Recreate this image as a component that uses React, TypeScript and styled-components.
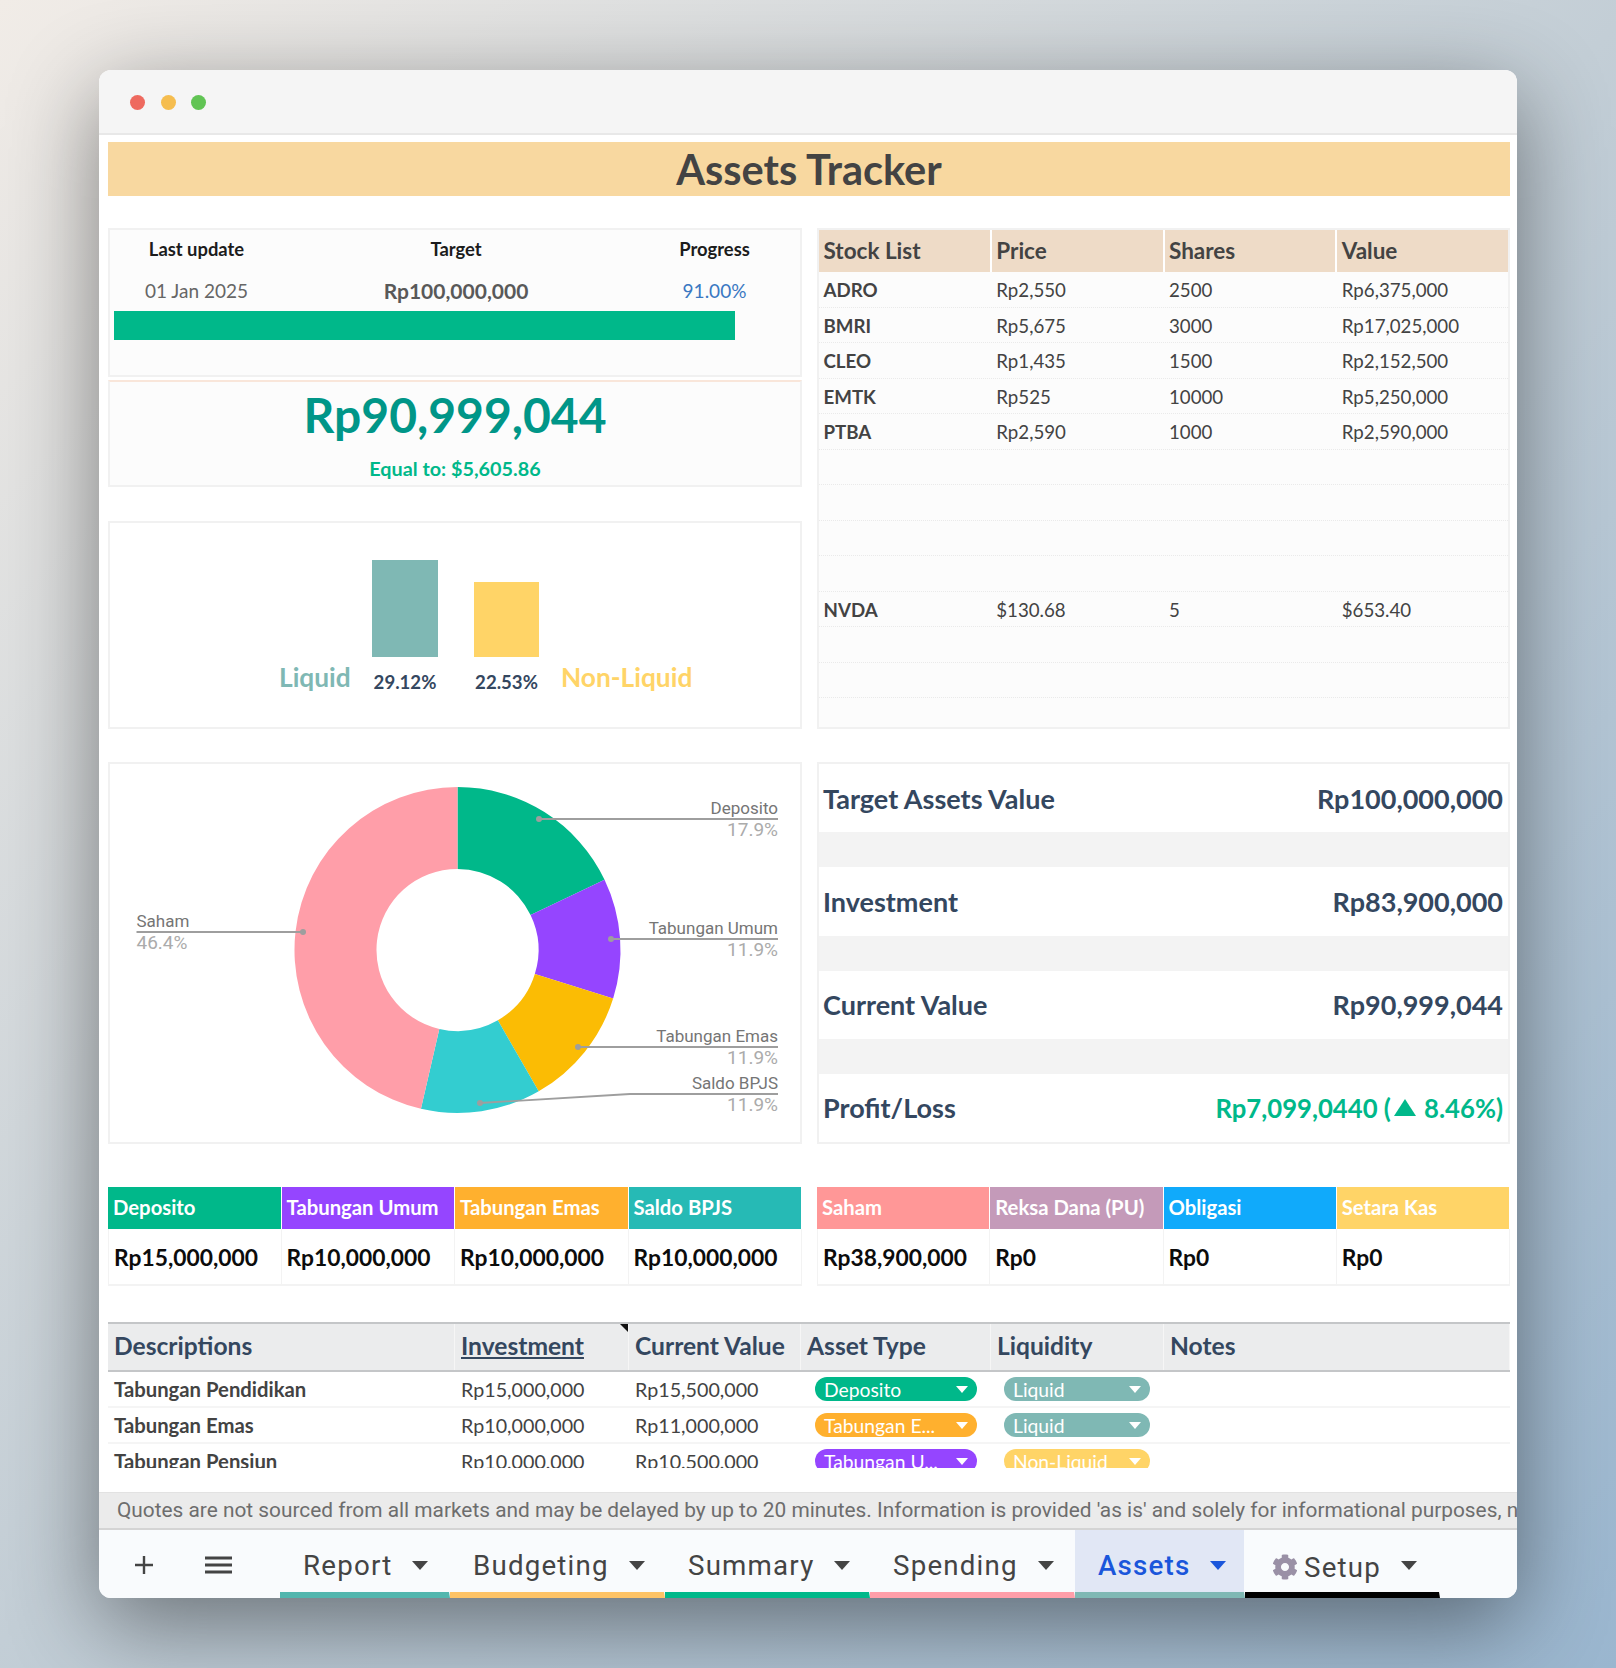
import { Fragment } from "react";
import styled, { createGlobalStyle } from "styled-components";
import { FaCog } from "react-icons/fa";

const GlobalStyle = createGlobalStyle`
  html, body {
    margin: 0;
    padding: 0;
  }
  body {
    font-family: "Lato", "Noto Sans", sans-serif;
  }
  * {
    box-sizing: border-box;
  }
`;

const Page = styled.div`
  width: 1616px;
  height: 1668px;
  padding: 70px 99px;
  background: linear-gradient(135deg, #f1ece7 0%, #c3ced6 50%, #9ab6cf 100%);
  overflow: hidden;
`;

const Window = styled.div`
  display: flex;
  flex-direction: column;
  width: 1418px;
  height: 1528px;
  background: #fff;
  border-radius: 12px;
  overflow: hidden;
  box-shadow: 0 25px 90px rgba(0, 0, 0, 0.45);
`;

const TitleBar = styled.div`
  display: flex;
  align-items: center;
  gap: 15.5px;
  height: 65px;
  padding: 1px 0 0 31px;
  background: #f5f5f5;
  border-bottom: 2px solid #e8e8e8;
`;

const Dot = styled.span<{ $color: string }>`
  width: 15px;
  height: 15px;
  border-radius: 50%;
  background: ${(p) => p.$color};
`;

const Sheet = styled.div`
  display: flex;
  flex-direction: column;
  flex: 1;
  min-height: 0;
  padding: 7px 7px 0 9px;
`;

const Banner = styled.h1`
  margin: 0 0 32px;
  height: 54px;
  background: #f8d8a0;
  color: #434343;
  font-size: 41.5px;
  font-weight: 700;
  line-height: 54px;
  text-align: center;
`;

const Columns = styled.div<{ $gap: number }>`
  display: grid;
  grid-template-columns: 694px 693px;
  column-gap: 15px;
  margin-bottom: ${(p) => p.$gap}px;
`;

const LeftStack = styled.div`
  display: flex;
  flex-direction: column;
`;

const Panel = styled.section<{ $shade?: boolean }>`
  border: 2px solid #f1f1f1;
  background: ${(p) => (p.$shade ? "#fcfcfc" : "#fff")};
`;

const ProgressPanel = styled(Panel)`
  height: 149px;
  margin-bottom: 3px;
  padding-top: 4px;
`;

const MetaGrid = styled.div`
  display: grid;
  grid-template-columns: 173px 346px 171px;
  grid-template-rows: 30px 46px;
  align-items: center;
  text-align: center;
`;

const MetaLabel = styled.div`
  color: #1c1c1c;
  font-size: 18.4px;
  font-weight: 700;
`;

const MetaValue = styled.div<{ $tone: string; $large?: boolean }>`
  padding-top: 6px;
  color: ${(p) => p.$tone};
  font-size: ${(p) => (p.$large ? 21 : 19)}px;
  font-weight: ${(p) => (p.$large ? 700 : 400)};
`;

const ProgressTrack = styled.div`
  margin: 1px 4px 0;
  height: 29px;
`;

const ProgressFill = styled.div`
  height: 100%;
  background: #00b88a;
`;

const TotalPanel = styled(Panel)`
  height: 107px;
  margin-bottom: 34px;
  border-top-color: #f9e6da;
  text-align: center;
`;

const TotalValue = styled.div`
  margin-top: 5px;
  color: #009688;
  font-size: 48px;
  font-weight: 700;
  line-height: 56px;
`;

const TotalNote = styled.div`
  margin-top: 13px;
  color: #00b88a;
  font-size: 19.8px;
  font-weight: 700;
`;

const LiquidPanel = styled(Panel)`
  height: 208px;
  padding: 36px 0 0 169px;
`;

const LiquidRow = styled.div`
  display: grid;
  grid-template-columns: 71px 66px 79px auto;
  column-gap: 22px;
  height: 135px;
  align-items: end;
`;

const LiquidName = styled.div<{ $color: string }>`
  color: ${(p) => p.$color};
  font-size: 26.3px;
  font-weight: 700;
  line-height: 30px;
  padding-bottom: 2px;
  white-space: nowrap;
`;

const BarColumn = styled.div<{ $offset?: number }>`
  display: flex;
  flex-direction: column;
  align-items: center;
  margin-left: ${(p) => p.$offset ?? 0}px;
`;

const Bar = styled.div<{ $color: string }>`
  width: 100%;
  background: ${(p) => p.$color};
`;

const BarValue = styled.div`
  margin-top: 13px;
  color: #34475f;
  font-size: 18.6px;
  font-weight: 700;
  line-height: 24px;
  white-space: nowrap;
`;

const StockPanel = styled(Panel)`
  display: flex;
  flex-direction: column;
  height: 501px;
  overflow: hidden;
`;

const StockHead = styled.div`
  display: grid;
  grid-template-columns: repeat(4, 1fr);
  column-gap: 2px;
  flex: none;
  height: 42px;
`;

const StockHeadCell = styled.div`
  display: flex;
  align-items: center;
  padding: 0 0 2px 4.5px;
  background: #eedbc7;
  color: #434343;
  font-size: 22.5px;
  font-weight: 700;
`;

const StockBody = styled.div`
  display: grid;
  flex: 1;
  min-height: 0;
  grid-auto-rows: 35.5px;
  background: #fcfcfc;
`;

const StockRow = styled.div`
  display: grid;
  grid-template-columns: repeat(4, 1fr);
  column-gap: 2px;
  align-items: center;
  border-bottom: 1px dotted #eaeaea;

  &:last-child {
    border-bottom: 0;
  }
`;

const StockCell = styled.div<{ $bold?: boolean }>`
  padding: 2px 0 0 4.5px;
  color: #434343;
  font-size: 18.7px;
  font-weight: ${(p) => (p.$bold ? 700 : 400)};
`;

const ChartPanel = styled(Panel)`
  height: 382px;
`;

const ChartSvg = styled.svg`
  display: block;
  width: 690px;
  height: 378px;
`;

const SummaryPanel = styled(Panel)`
  display: flex;
  flex-direction: column;
  height: 382px;
`;

const SummaryRow = styled.div`
  display: flex;
  flex: 1;
  align-items: center;
  justify-content: space-between;
  padding: 0 5px 0 4px;
  color: #34475f;
  font-size: 27px;
  font-weight: 700;
`;

const SummaryGap = styled.div`
  height: 35px;
  background: #f3f3f3;
`;

const ProfitValue = styled.span`
  display: flex;
  align-items: center;
  color: #00b88a;
  font-size: 25.7px;
  white-space: pre;
`;

const ProfitArrow = styled.span`
  width: 0;
  height: 0;
  margin: 0 2px 0 3px;
  border-left: 11px solid transparent;
  border-right: 11px solid transparent;
  border-bottom: 17px solid #00b88a;
`;

const CategoryGrid = styled.div`
  display: grid;
  grid-template-columns: repeat(4, 1fr);
  grid-template-rows: 42px 55px;
  border-bottom: 2px solid #f3f3f3;
`;

const CategoryHead = styled.div<{ $color: string }>`
  display: flex;
  align-items: center;
  padding: 0 0 2px 5px;
  background: ${(p) => p.$color};
  color: #fff;
  font-size: 20.3px;
  font-weight: 700;
  white-space: nowrap;
  border-right: 1px solid #fff;
`;

const CategoryValue = styled.div`
  display: flex;
  align-items: center;
  padding: 1px 0 0 5px;
  color: #0c0c0c;
  font-size: 22.8px;
  font-weight: 700;
  border-right: 1px solid #f3f3f3;

  &:nth-child(5) {
    border-left: 1px solid #f3f3f3;
  }
`;

const LedgerClip = styled.div`
  height: 146px;
  overflow: hidden;
`;

const LedgerRow = styled.div`
  display: grid;
  grid-template-columns: 347px 174px 172px 190px 173px 1fr;
  align-items: center;
`;

const LedgerHead = styled(LedgerRow)`
  height: 50px;
  background: #ebeced;
  border-top: 2px solid #c4c6c8;
  border-bottom: 2px solid #c4c6c8;
`;

const LedgerHeadCell = styled.div<{ $noted?: boolean }>`
  position: relative;
  display: flex;
  align-items: center;
  height: 100%;
  padding: 0 0 3px 6px;
  color: #34475f;
  font-size: 24.6px;
  font-weight: 700;
  white-space: nowrap;
  border-right: 1px solid #f6f6f6;

  &::after {
    content: "";
    display: ${(p) => (p.$noted ? "block" : "none")};
    position: absolute;
    top: 0;
    right: 0;
    border-top: 8px solid #111;
    border-left: 8px solid transparent;
  }
`;

const HeadLink = styled.span`
  text-decoration: underline;
`;

const LedgerBodyRow = styled(LedgerRow)`
  height: 36px;
  border-bottom: 2px solid #f5f5f5;
`;

const LedgerCell = styled.div<{ $bold?: boolean }>`
  padding-left: 6px;
  color: #434343;
  font-size: ${(p) => (p.$bold ? 20.3 : 19.7)}px;
  font-weight: ${(p) => (p.$bold ? 700 : 400)};
  white-space: nowrap;
`;

const PillCell = styled.div<{ $inset: number; $width: number }>`
  padding-left: ${(p) => p.$inset}px;
  width: ${(p) => p.$inset + p.$width}px;
`;

const Pill = styled.div<{ $color: string }>`
  display: flex;
  align-items: center;
  justify-content: space-between;
  height: 24px;
  padding: 0 9px 0 9px;
  border-radius: 12px;
  background: ${(p) => p.$color};
  color: #fff;
  font-size: 19.3px;
  white-space: nowrap;
`;

const PillCaret = styled.span`
  width: 0;
  height: 0;
  border-left: 6px solid transparent;
  border-right: 6px solid transparent;
  border-top: 7px solid #fff;
`;

const Notice = styled.div`
  flex: none;
  height: 38px;
  margin-top: 24px;
  padding-left: 18px;
  background: #ebebeb;
  border-top: 1px solid #e2e2e2;
  border-bottom: 2px solid #d4d4d4;
  color: #6d6d6d;
  font-family: "Roboto", sans-serif;
  font-size: 20.85px;
  line-height: 35px;
  white-space: nowrap;
  overflow: hidden;
`;

const TabBar = styled.nav`
  flex: none;
  display: flex;
  height: 68px;
  background: #f9fbfd;
`;

const TabTools = styled.div`
  display: flex;
  align-items: center;
  width: 181px;
  height: 62px;
  padding: 8px 0 0 35px;
  color: #444;
`;

const PlusIcon = styled.svg`
  width: 20px;
  height: 20px;
  margin-right: 51px;
`;

const MenuIcon = styled.svg`
  width: 27px;
  height: 18px;
`;

const Tab = styled.div<{ $width: number; $accent: string; $active?: boolean }>`
  display: flex;
  align-items: center;
  width: ${(p) => p.$width}px;
  padding: 8px 0 0 23px;
  background: ${(p) => (p.$active ? "#e1e7f5" : "transparent")};
  border-bottom: 6px solid ${(p) => p.$accent};
  border-right: 1px solid #f9fbfd;
  color: ${(p) => (p.$active ? "#1a56db" : "#444")};
  font-family: "Roboto", sans-serif;
  font-size: 27.7px;
  font-weight: ${(p) => (p.$active ? 500 : 400)};
  letter-spacing: 1.2px;
`;

const TabCaret = styled.span<{ $active?: boolean }>`
  width: 0;
  height: 0;
  margin-left: 20px;
  border-left: 8px solid transparent;
  border-right: 8px solid transparent;
  border-top: 9px solid ${(p) => (p.$active ? "#1a56db" : "#444")};
`;

const GearIcon = styled(FaCog)`
  flex: none;
  width: 26px;
  height: 26px;
  margin: 4px 6px 0 4px;
  color: #9a90a6;
`;

const SetupLabel = styled.span`
  padding-top: 4px;
`;

const stocks = [
  ["ADRO", "Rp2,550", "2500", "Rp6,375,000"],
  ["BMRI", "Rp5,675", "3000", "Rp17,025,000"],
  ["CLEO", "Rp1,435", "1500", "Rp2,152,500"],
  ["EMTK", "Rp525", "10000", "Rp5,250,000"],
  ["PTBA", "Rp2,590", "1000", "Rp2,590,000"],
  ["", "", "", ""],
  ["", "", "", ""],
  ["", "", "", ""],
  ["", "", "", ""],
  ["NVDA", "$130.68", "5", "$653.40"],
  ["", "", "", ""],
  ["", "", "", ""],
  ["", "", "", ""],
];

const summary = [
  ["Target Assets Value", "Rp100,000,000"],
  ["Investment", "Rp83,900,000"],
  ["Current Value", "Rp90,999,044"],
];

const leftCategories = [
  ["Deposito", "#00b88a", "Rp15,000,000"],
  ["Tabungan Umum", "#9545ff", "Rp10,000,000"],
  ["Tabungan Emas", "#ffb02e", "Rp10,000,000"],
  ["Saldo BPJS", "#26bab5", "Rp10,000,000"],
];

const rightCategories = [
  ["Saham", "#ff9797", "Rp38,900,000"],
  ["Reksa Dana (PU)", "#c49ab9", "Rp0"],
  ["Obligasi", "#10aafb", "Rp0"],
  ["Setara Kas", "#ffd467", "Rp0"],
];

const ledger = [
  ["Tabungan Pendidikan", "Rp15,000,000", "Rp15,500,000", "Deposito", "#00b88a", "Liquid", "#7fb8b4"],
  ["Tabungan Emas", "Rp10,000,000", "Rp11,000,000", "Tabungan E...", "#ffb02e", "Liquid", "#7fb8b4"],
  ["Tabungan Pensiun", "Rp10,000,000", "Rp10,500,000", "Tabungan U...", "#9545ff", "Non-Liquid", "#ffd467"],
];

const tabs = [
  { name: "Report", width: 170, accent: "#52b6ae" },
  { name: "Budgeting", width: 215, accent: "#fdc366" },
  { name: "Summary", width: 205, accent: "#00b88a" },
  { name: "Spending", width: 205, accent: "#ff9ea9" },
  { name: "Assets", width: 170, accent: "#7fb8b4", active: true },
];

const PROGRESS = 91;
const BAR_SCALE = 3.33;

// centre and radii of the donut, in the svg's own coordinates
const CX = 347.5;
const CY = 186;
const OUTER = 163;
const INNER = 81;

const slices = [
  { share: 17.9, color: "#00b88a" },
  { share: 11.9, color: "#9545ff" },
  { share: 11.9, color: "#fbbc04" },
  { share: 11.9, color: "#33cdd0" },
  { share: 46.4, color: "#ff9ea9" },
];

function arcPath(from: number, to: number) {
  const point = (r: number, pct: number) => {
    const a = (pct / 100) * Math.PI * 2;
    return `${(CX + r * Math.sin(a)).toFixed(2)} ${(CY - r * Math.cos(a)).toFixed(2)}`;
  };
  const large = to - from > 50 ? 1 : 0;
  return `M${point(OUTER, from)} A${OUTER} ${OUTER} 0 ${large} 1 ${point(OUTER, to)} L${point(INNER, to)} A${INNER} ${INNER} 0 ${large} 0 ${point(INNER, from)} Z`;
}

const callouts = [
  { name: "Deposito", pct: "17.9%", line: "429,55 668,55", y: 55 },
  { name: "Tabungan Umum", pct: "11.9%", line: "501,175 668,175", y: 175 },
  { name: "Tabungan Emas", pct: "11.9%", line: "468,283 668,283", y: 283 },
  { name: "Saldo BPJS", pct: "11.9%", line: "370,339 520,330 668,330", y: 330 },
];

function Donut() {
  let run = 0;
  return (
    <ChartSvg viewBox="0 0 690 378">
      {slices.map((s) => {
        const d = arcPath(run, run + s.share);
        run += s.share;
        return <path key={s.color} d={d} fill={s.color} />;
      })}
      {callouts.map((c) => {
        const first = c.line.split(" ")[0].split(",");
        return (
          <g key={c.name}>
            <polyline points={c.line} fill="none" stroke="#9e9e9e" strokeWidth="1.8" />
            <circle cx={first[0]} cy={first[1]} r="3" fill="#9e9e9e" />
            <text x="668" y={c.y - 5} textAnchor="end" fontFamily="Roboto" fontSize="17" fill="#757575">
              {c.name}
            </text>
            <text x="668" y={c.y + 17} textAnchor="end" fontFamily="Roboto" fontSize="19" fill="#ababab">
              {c.pct}
            </text>
          </g>
        );
      })}
      <polyline points="26.5,168 193,168" fill="none" stroke="#9e9e9e" strokeWidth="1.8" />
      <circle cx="193" cy="168" r="3" fill="#9e9e9e" />
      <text x="26.5" y="163" fontFamily="Roboto" fontSize="17" fill="#757575">
        Saham
      </text>
      <text x="26.5" y="185" fontFamily="Roboto" fontSize="19" fill="#ababab">
        46.4%
      </text>
    </ChartSvg>
  );
}

export default function App() {
  return (
    <Page>
      <GlobalStyle />
      <Window>
        <TitleBar>
          <Dot $color="#ee6a5f" />
          <Dot $color="#f5bd4f" />
          <Dot $color="#61c454" />
        </TitleBar>
        <Sheet>
          <Banner>Assets Tracker</Banner>

          <Columns $gap={33}>
            <LeftStack>
              <ProgressPanel $shade>
                <MetaGrid>
                  <MetaLabel>Last update</MetaLabel>
                  <MetaLabel>Target</MetaLabel>
                  <MetaLabel>Progress</MetaLabel>
                  <MetaValue $tone="#666">01 Jan 2025</MetaValue>
                  <MetaValue $tone="#595959" $large>
                    Rp100,000,000
                  </MetaValue>
                  <MetaValue $tone="#3a78c2">91.00%</MetaValue>
                </MetaGrid>
                <ProgressTrack>
                  <ProgressFill style={{ width: `${PROGRESS}%` }} />
                </ProgressTrack>
              </ProgressPanel>
              <TotalPanel $shade>
                <TotalValue>Rp90,999,044</TotalValue>
                <TotalNote>Equal to: $5,605.86</TotalNote>
              </TotalPanel>
              <LiquidPanel>
                <LiquidRow>
                  <LiquidName $color="#7fb8b4">Liquid</LiquidName>
                  <BarColumn>
                    <Bar $color="#7fb8b4" style={{ height: 29.12 * BAR_SCALE }} />
                    <BarValue>29.12%</BarValue>
                  </BarColumn>
                  <BarColumn $offset={14}>
                    <Bar $color="#ffd467" style={{ height: 22.53 * BAR_SCALE }} />
                    <BarValue>22.53%</BarValue>
                  </BarColumn>
                  <LiquidName $color="#ffd467">Non-Liquid</LiquidName>
                </LiquidRow>
              </LiquidPanel>
            </LeftStack>

            <StockPanel>
              <StockHead>
                <StockHeadCell>Stock List</StockHeadCell>
                <StockHeadCell>Price</StockHeadCell>
                <StockHeadCell>Shares</StockHeadCell>
                <StockHeadCell>Value</StockHeadCell>
              </StockHead>
              <StockBody>
                {stocks.map((row, i) => (
                  <StockRow key={i}>
                    <StockCell $bold>{row[0]}</StockCell>
                    <StockCell>{row[1]}</StockCell>
                    <StockCell>{row[2]}</StockCell>
                    <StockCell>{row[3]}</StockCell>
                  </StockRow>
                ))}
              </StockBody>
            </StockPanel>
          </Columns>

          <Columns $gap={43}>
            <ChartPanel>
              <Donut />
            </ChartPanel>
            <SummaryPanel>
              {summary.map(([label, value]) => (
                <Fragment key={label}>
                  <SummaryRow>
                    <span>{label}</span>
                    <span>{value}</span>
                  </SummaryRow>
                  <SummaryGap />
                </Fragment>
              ))}
              <SummaryRow>
                <span>Profit/Loss</span>
                <ProfitValue>
                  Rp7,099,0440 (<ProfitArrow /> 8.46%)
                </ProfitValue>
              </SummaryRow>
            </SummaryPanel>
          </Columns>

          <Columns $gap={36}>
            {[leftCategories, rightCategories].map((group, g) => (
              <CategoryGrid key={g}>
                {group.map(([name, color]) => (
                  <CategoryHead key={name} $color={color}>
                    {name}
                  </CategoryHead>
                ))}
                {group.map(([name, , value]) => (
                  <CategoryValue key={name}>{value}</CategoryValue>
                ))}
              </CategoryGrid>
            ))}
          </Columns>

          <LedgerClip>
            <LedgerHead>
              <LedgerHeadCell>Descriptions</LedgerHeadCell>
              <LedgerHeadCell $noted>
                <HeadLink>Investment</HeadLink>
              </LedgerHeadCell>
              <LedgerHeadCell>Current Value</LedgerHeadCell>
              <LedgerHeadCell>Asset Type</LedgerHeadCell>
              <LedgerHeadCell>Liquidity</LedgerHeadCell>
              <LedgerHeadCell>Notes</LedgerHeadCell>
            </LedgerHead>
            {ledger.map((row) => (
              <LedgerBodyRow key={row[0]}>
                <LedgerCell $bold>{row[0]}</LedgerCell>
                <LedgerCell>{row[1]}</LedgerCell>
                <LedgerCell>{row[2]}</LedgerCell>
                <PillCell $inset={14} $width={162}>
                  <Pill $color={row[4]}>
                    {row[3]}
                    <PillCaret />
                  </Pill>
                </PillCell>
                <PillCell $inset={13} $width={146}>
                  <Pill $color={row[6]}>
                    {row[5]}
                    <PillCaret />
                  </Pill>
                </PillCell>
                <div />
              </LedgerBodyRow>
            ))}
          </LedgerClip>
        </Sheet>

        <Notice>
          Quotes are not sourced from all markets and may be delayed by up to 20 minutes. Information is provided 'as is' and solely for informational purposes, not for trading purposes or advice.
        </Notice>

        <TabBar>
          <TabTools>
            <PlusIcon viewBox="0 0 20 20">
              <path d="M10 1v18M1 10h18" stroke="currentColor" strokeWidth="2.4" fill="none" />
            </PlusIcon>
            <MenuIcon viewBox="0 0 27 18">
              <path d="M0 2h27M0 9h27M0 16h27" stroke="currentColor" strokeWidth="2.8" fill="none" />
            </MenuIcon>
          </TabTools>
          {tabs.map((t) => (
            <Tab key={t.name} $width={t.width} $accent={t.accent} $active={t.active}>
              {t.name}
              <TabCaret $active={t.active} />
            </Tab>
          ))}
          <Tab $width={195} $accent="#000">
            <GearIcon />
            <SetupLabel>Setup</SetupLabel>
            <TabCaret />
          </Tab>
        </TabBar>
      </Window>
    </Page>
  );
}
